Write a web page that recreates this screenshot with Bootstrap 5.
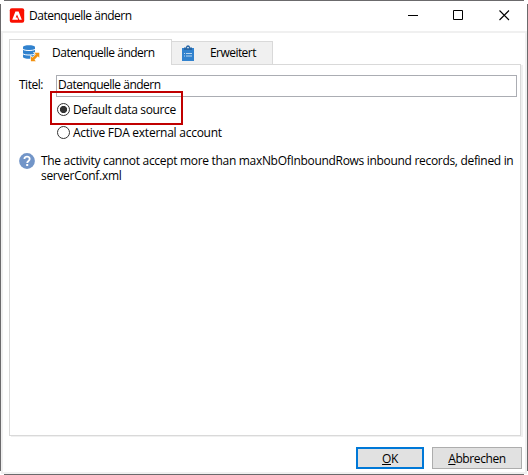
<!DOCTYPE html>
<html lang="de">
<head>
<meta charset="utf-8">
<meta name="viewport" content="width=device-width, initial-scale=1">
<title>Datenquelle ändern</title>
<link href="https://cdn.jsdelivr.net/npm/bootstrap@5.3.0/dist/css/bootstrap.min.css" rel="stylesheet">
<style>
html,body{height:100%}
body{font:12px/15px "Open Sans","Noto Sans",sans-serif;color:#000;background:#fff;letter-spacing:-.28px;overflow:hidden}
.win{--edge:linear-gradient(#6b6a6c,#6b6a6c);width:528px;height:475px;padding:1px;background:var(--edge) 4px 0/520px 1px no-repeat,var(--edge) 4px 474px/520px 1px no-repeat,var(--edge) 0 4px/1px 467px no-repeat,var(--edge) 527px 4px/1px 467px no-repeat,#fff}
.titlebar{height:29px;margin-bottom:1px;padding:0 17px 0 8px}
.caption{margin-left:4px}
.caption,.tab-on{letter-spacing:-.49px}
.sys{gap:34px}
.sys svg:last-child{margin-left:1px}
.client{border:2px solid #f0f0f0;height:443px;padding:6px 2px 3px 6px}
.tabs-row{height:26px;position:relative;z-index:1}
.tab-on{width:163px;height:26px;background:#fff;border:1px solid #d9d9d9;border-bottom:0;padding-left:12px;gap:12px}
.tab-off{width:101px;height:24px;background:#f0f0f0;border:1px solid #d9d9d9;border-left:0;padding:0 0 1px 9px;gap:15px;letter-spacing:-.55px}
.panel{margin-top:-1px;width:512px;height:372px;border:1px solid #d9d9d9;box-shadow:2px 1px 0 #f0f0f0;padding:10px 3px 0 9px}
.title-label{width:37px;padding-top:2px;letter-spacing:-.5px}
.title-input{height:22px;border:1px solid #abadb3;border-radius:0;padding:0 0 3px 1px;font:inherit;letter-spacing:-.49px;color:#000;min-width:0}
.choice-hot{width:133px;height:34px;margin:-6px 0 0 31px;border:2px solid #c00000;padding:3px 0 0 5px;gap:3px;position:relative;letter-spacing:-.36px}
.choice{gap:3px;margin-left:38px;letter-spacing:-.25px}
.dot{width:13px;height:13px;border:1px solid #333;border-radius:50%;background:#fff}
.dot.on{background:radial-gradient(circle,#333 0 3.3px,#fff 3.9px)}
.note{margin-top:13px;gap:6px;letter-spacing:-.31px}
.buttons{gap:8px;margin-top:11px;padding-right:1px}
.dlg-btn{height:22px;background:#e1e1e1;border:1px solid #adadad;border-radius:0;padding:0;font:inherit;letter-spacing:-.4px;color:#000}
.dlg-btn.ok{width:68px;border:2px solid #0078d7}
.cancel{width:90px}
</style>
<script src="https://cdn.jsdelivr.net/npm/bootstrap@5.3.0/dist/js/bootstrap.bundle.min.js"></script>
</head>
<body>
<div class="win">
 <header class="titlebar d-flex align-items-center">
  <svg width="16" height="16" viewBox="0 0 16 16"><rect x=".8" y=".3" width="14.400" height="14.400" rx="2" fill="#fa0f00"/><path d="M6.400 3.500h3.200l3.200 8.200h-2.500L8 6.400 6.700 9.600h1.600l.8 2.100H3.200z" fill="#fff"/></svg>
  <span class="caption me-auto">Datenquelle ändern</span>
  <div class="sys d-flex align-items-center">
   <svg width="11" height="11"><path d="M0 5.500h10" stroke="#000"/></svg>
   <svg width="11" height="11"><path d="M.5.5h9v9h-9z" fill="none" stroke="#000"/></svg>
   <svg width="11" height="11"><path d="M.5.5l9.500 9.500M10 .5L.5 10" stroke="#000" stroke-width="1.100"/></svg>
  </div>
 </header>
 <main class="client">
  <div class="tabs-row d-flex align-items-end" role="tablist">
   <div class="tab-on d-flex align-items-center" role="tab">
    <svg width="18" height="18" viewBox="0 0 18 18"><path d="M1 3.200C1 .6 13 .6 13 3.200v9.600c0 2.700-12 2.700-12 0z" fill="#3182ce"/><path d="M1 5.300c1.500 1.600 10.500 1.600 12 0M1 9.800c1.500 1.600 10.500 1.600 12 0" fill="none" stroke="#fff" stroke-width="1"/><path d="M12.300 8.800h5v5l-1.500-1.500-3.400 3.400 1.500 1.500h-5v-5l1.500 1.500 3.400-3.400z" fill="#f29111" stroke="#fff" stroke-width="1.200" paint-order="stroke"/></svg>
    <span>Datenquelle ändern</span>
   </div>
   <div class="tab-off d-flex align-items-center" role="tab">
    <svg width="14" height="16" viewBox="0 0 14 16"><path d="M1 3h12v13H1z" fill="#3182ce"/><path d="M3 5V2.500h2C5-.5 9-.5 9 2.500h2V5z" fill="#2766a5"/><path d="M6.300 2h1.400v1.300H6.300z" fill="#fff"/><path d="M3 8.500h1m1 0h6M3 11h1m1 0h6" stroke="#b9d6ef"/></svg>
    <span>Erweitert</span>
   </div>
  </div>
  <section class="panel">
   <div class="d-flex">
    <label class="title-label" for="titel">Titel:</label>
    <input id="titel" class="title-input flex-grow-1" value="Datenquelle ändern">
   </div>
   <div class="choice-hot d-flex align-items-center"><span class="dot on"></span><span>Default data source</span></div>
   <div class="choice d-flex align-items-center"><span class="dot"></span><span>Active FDA external account</span></div>
   <div class="note d-flex">
    <svg width="16" height="16" viewBox="0 0 16 16"><circle cx="8" cy="8" r="7.900" fill="#7295c8"/><path d="M5.400 6C5.400 2.900 10.700 2.900 10.700 6c0 1.900-2.500 2-2.500 4" fill="none" stroke="#fff" stroke-width="1.800"/><path d="M7.200 11h2v2h-2z" fill="#fff"/></svg>
    <div>The activity cannot accept more than maxNbOfInboundRows inbound records, defined in<br>serverConf.xml</div>
   </div>
  </section>
  <footer class="buttons d-flex justify-content-end">
   <button class="dlg-btn ok"><u>O</u>K</button>
   <button class="dlg-btn cancel"><u>A</u>bbrechen</button>
  </footer>
 </main>
</div>
</body>
</html>
